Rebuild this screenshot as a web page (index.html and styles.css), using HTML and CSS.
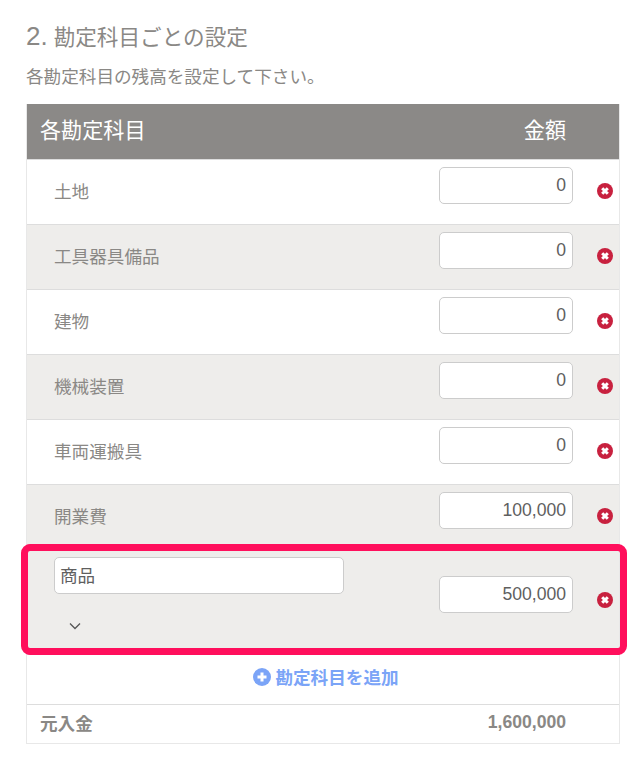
FILE: index.html
```html
<!DOCTYPE html>
<html lang="ja">
<head>
    <meta charset="UTF-8">
    <meta name="viewport" content="width=device-width, initial-scale=1.0">
    <title>勘定科目ごとの設定</title>
    <link rel="stylesheet" href="styles.css">
</head>
<body>
<h2 class="title"><span class="title-num">2.</span> 勘定科目ごとの設定</h2>
<p class="lead">各勘定科目の残高を設定して下さい。</p>
<div class="accounts">
    <div class="accounts-head">
        <div class="head-name">各勘定科目</div>
        <div class="head-amount">金額</div>
    </div>

    <div class="row">
        <div class="row-name">土地</div>
        <input class="amount" type="text" value="0">
        <svg class="remove" viewBox="0 0 16 16"><circle cx="8" cy="8" r="8"/><path d="M5.2 5.2l5.6 5.6M10.8 5.2l-5.6 5.6"/></svg>
    </div>
    <div class="row row-alt">
        <div class="row-name">工具器具備品</div>
        <input class="amount" type="text" value="0">
        <svg class="remove" viewBox="0 0 16 16"><circle cx="8" cy="8" r="8"/><path d="M5.2 5.2l5.6 5.6M10.8 5.2l-5.6 5.6"/></svg>
    </div>
    <div class="row">
        <div class="row-name">建物</div>
        <input class="amount" type="text" value="0">
        <svg class="remove" viewBox="0 0 16 16"><circle cx="8" cy="8" r="8"/><path d="M5.2 5.2l5.6 5.6M10.8 5.2l-5.6 5.6"/></svg>
    </div>
    <div class="row row-alt">
        <div class="row-name">機械装置</div>
        <input class="amount" type="text" value="0">
        <svg class="remove" viewBox="0 0 16 16"><circle cx="8" cy="8" r="8"/><path d="M5.2 5.2l5.6 5.6M10.8 5.2l-5.6 5.6"/></svg>
    </div>
    <div class="row">
        <div class="row-name">車両運搬具</div>
        <input class="amount" type="text" value="0">
        <svg class="remove" viewBox="0 0 16 16"><circle cx="8" cy="8" r="8"/><path d="M5.2 5.2l5.6 5.6M10.8 5.2l-5.6 5.6"/></svg>
    </div>
    <div class="row row-alt">
        <div class="row-name">開業費</div>
        <input class="amount" type="text" value="100,000">
        <svg class="remove" viewBox="0 0 16 16"><circle cx="8" cy="8" r="8"/><path d="M5.2 5.2l5.6 5.6M10.8 5.2l-5.6 5.6"/></svg>
    </div>
    <div class="row row-alt row-custom">
        <div class="row-name">
            <input class="name-input" type="text" value="商品">
            <svg class="chevron" viewBox="0 0 12 8"><path d="M1 1.5l5 5 5-5"/></svg>
        </div>
        <input class="amount" type="text" value="500,000">
        <svg class="remove" viewBox="0 0 16 16"><circle cx="8" cy="8" r="8"/><path d="M5.2 5.2l5.6 5.6M10.8 5.2l-5.6 5.6"/></svg>
    </div>

    <div class="add-row">
        <svg class="add-icon" viewBox="0 0 18 18"><circle cx="9" cy="9" r="9"/><path d="M9 4.5v9M4.5 9h9"/></svg>
        <span>勘定科目を追加</span>
    </div>
    <div class="total-row">
        <div class="total-name">元入金</div>
        <div class="total-amount">1,600,000</div>
    </div>
</div>
</body>
</html>
```

FILE: styles.css
```css
body {
    margin: 0;
    padding: 23px 23px 0 26px;
    font-family: "Liberation Sans", "Noto Sans CJK JP", sans-serif;
    color: #8a8885;
    background: #fff;
}
input {
    font-family: "Liberation Sans", "Noto Sans CJK JP", sans-serif;
    font-size: 17.6px;
    color: #5f5f5f;
    background: #fff;
    border: 1px solid #ccc;
    border-radius: 5px;
    box-sizing: border-box;
    height: 37px;
    outline: none;
}
.title {
    margin: 0;
    font-size: 21.6px;
    font-weight: normal;
    line-height: 27px;
}
.title-num {
    font-size: 26px;
}
.lead {
    margin: 13px 0 0;
    font-size: 17.6px;
    line-height: 26px;
}
.accounts {
    margin-top: 14px;
    border: 1px solid #e8e8e8;
    border-top: none;
    width: 594px;
    box-sizing: border-box;
}
.accounts-head {
    display: flex;
    justify-content: space-between;
    height: 56px;
    box-sizing: border-box;
    padding: 10px 53px 0 13px;
    background: #8b8987;
    border-bottom: 1px solid #ddd;
    color: #fff;
    font-size: 21.12px;
}
.row {
    display: flex;
    align-items: center;
    height: 65px;
    box-sizing: border-box;
    border-bottom: 1px solid #ddd;
    padding: 0 0 2px 27px;
}
.row-alt {
    background: #eeedeb;
}
.row-name {
    flex: 1;
    margin-bottom: 2px;
    font-size: 17.6px;
}
.amount {
    width: 134px;
    margin-bottom: 11px;
    padding: 0 6px;
    text-align: right;
}
.remove {
    width: 16px;
    height: 16px;
    margin: 0 6px 0 24px;
    flex: none;
}
.remove circle {
    fill: #c8213f;
}
.remove path {
    stroke: #fff;
    stroke-width: 3;
    fill: none;
}
.row-custom {
    position: relative;
    height: 99px;
    border-bottom: none;
    padding-bottom: 0;
}
.row-custom::after {
    content: "";
    position: absolute;
    top: -6px;
    left: -6px;
    right: -8px;
    bottom: -6px;
    border: 7px solid #ff0f5c;
    border-radius: 9px;
    pointer-events: none;
}
.row-custom .row-name {
    align-self: flex-start;
    margin-bottom: 0;
    padding-top: 7px;
}
.name-input {
    display: block;
    width: 290px;
    padding: 0 5px 2px;
}
.chevron {
    display: block;
    width: 12px;
    height: 8px;
    margin: 28px 0 0 15px;
}
.chevron path {
    stroke: #555;
    stroke-width: 1.3;
    fill: none;
}
.add-row {
    display: flex;
    justify-content: center;
    align-items: center;
    gap: 4px;
    height: 56px;
    box-sizing: border-box;
    border-bottom: 1px solid #ddd;
    padding-left: 6px;
    color: #7ba4f7;
    font-size: 17.6px;
    font-weight: bold;
}
.add-icon {
    width: 18px;
    height: 18px;
}
.add-icon circle {
    fill: #7ba4f7;
}
.add-icon path {
    stroke: #fff;
    stroke-width: 3;
    fill: none;
}
.total-row {
    display: flex;
    justify-content: space-between;
    align-items: center;
    height: 38px;
    box-sizing: border-box;
    padding: 0 53px 3px 13px;
    font-size: 17.6px;
    font-weight: bold;
}
```
